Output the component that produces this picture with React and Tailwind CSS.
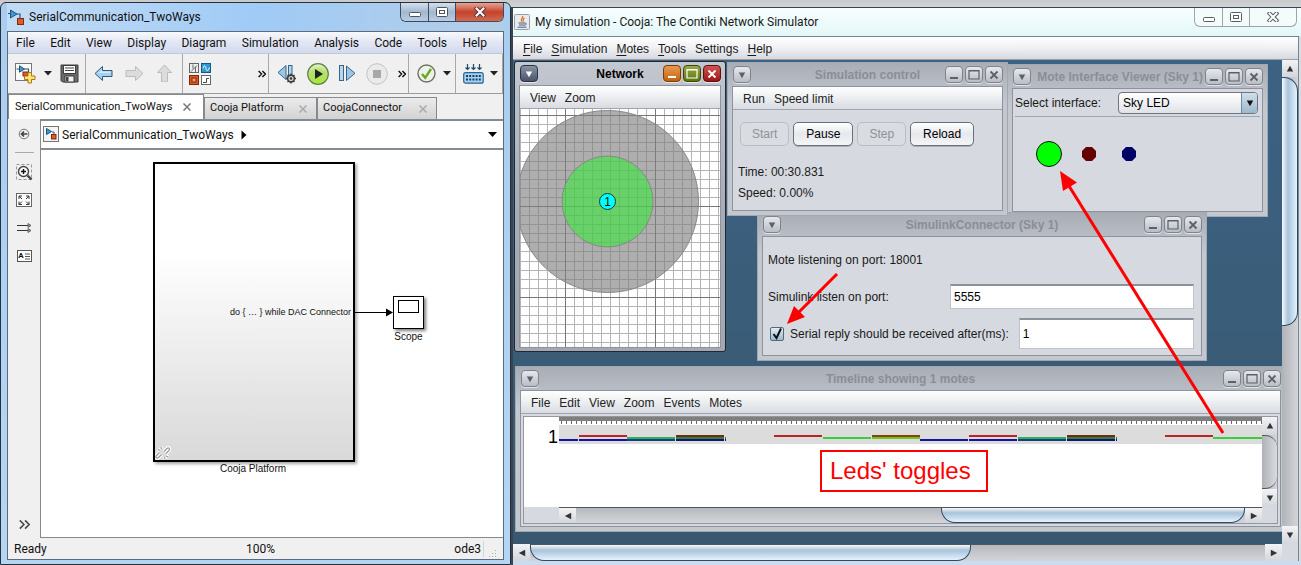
import React from "react";

/* ---------- small drawings ---------- */

const Caret = ({ className = "" }) => (
  <svg width="8" height="5" viewBox="0 0 8 5" className={className}>
    <path d="M0 0h8L4 4.5z" fill="#222" />
  </svg>
);

const Chevrons = ({ size = 8, color = "#111", w = 1.4 }) => (
  <svg width={size} height={size} viewBox="0 0 8 8" fill="none" stroke={color} strokeWidth={w}>
    <path d="M0.6 1l3 3-3 3M4.4 1l3 3-3 3" />
  </svg>
);

const ModelGlyph = ({ size = 16 }) => (
  <svg width={size} height={size} viewBox="0 0 16 16">
    <path d="M0 4.500h3M8 5h4v5" fill="none" stroke="#2c5878" strokeWidth="1.200" />
    <path d="M2.500 1l6.500 4-6.500 4z" fill="#3b9ad4" stroke="#1d557c" />
    <rect x="9.500" y="9.500" width="6" height="6" fill="#e2572b" stroke="#7e2d10" />
  </svg>
);

const FramedModel = () => (
  <svg width="17" height="17" viewBox="0 0 17 17">
    <rect x="0.500" y="0.500" width="15" height="15" fill="#f4f4f4" stroke="#777" />
    <path d="M9 6h2v4" fill="none" stroke="#2c5878" />
    <path d="M3.500 2.500l5 3-5 3z" fill="#3b9ad4" stroke="#1d557c" />
    <rect x="8.500" y="8.500" width="4.500" height="4.500" fill="#e2572b" stroke="#7e2d10" />
  </svg>
);

const NewIcon = () => (
  <svg width="21" height="21" viewBox="0 0 21 21">
    <rect x="0.500" y="0.500" width="16" height="17" fill="#fbfbfb" stroke="#777" />
    <path d="M1.500 6h3M9 6h4.500v4" fill="none" stroke="#2c5878" strokeWidth="1.200" />
    <path d="M4.500 2.800l5 3.200-5 3.200z" fill="#3b9ad4" stroke="#1d557c" />
    <rect x="8" y="9" width="5" height="4" fill="#e2572b" stroke="#7e2d10" />
    <path d="M13 9.500h3.500v3.500h3.500v3.500h-3.500v3.500H13v-3.500H9.500V13H13z" fill="#ffe27a" stroke="#a97a12" />
  </svg>
);

const SaveIcon = () => (
  <svg width="19" height="19" viewBox="0 0 19 19">
    <path d="M1 1h17v17H2.500L1 16.500z" fill="#6b6b6b" stroke="#3c3c3c" />
    <rect x="3.500" y="1.500" width="12" height="8" fill="#fff" stroke="#3c3c3c" />
    <path d="M5 4h9M5 6.500h9" stroke="#444" />
    <rect x="5" y="12" width="9" height="6" fill="#f0f0f0" stroke="#3c3c3c" />
    <rect x="6" y="13" width="2.500" height="4.500" fill="#444" />
  </svg>
);

const ArrowShape = ({ rotate, on }) => (
  <svg width="19" height="17" viewBox="0 0 19 17">
    <g transform={`rotate(${rotate} 9.500 8.500)`}>
      <path
        d="M1 8.500l7.500-7v4H18v6H8.500v4z"
        fill={on ? "#a4d0f2" : "#dcdcdc"}
        stroke={on ? "#31597c" : "#bcbcbc"}
        strokeLinejoin="round"
      />
      {on && <path d="M4 8l4-3v1.500h8.500V8z" fill="#d5ebfb" />}
    </g>
  </svg>
);

const LibraryIcon = () => (
  <svg width="22" height="22" viewBox="0 0 22 22">
    <rect x="0.500" y="0.500" width="9" height="9" fill="#eee" stroke="#666" />
    <path d="M2 8.500l6-6M4 1.500v4M6.500 4v5" stroke="#666" fill="none" />
    <rect x="12.500" y="0.500" width="9" height="9" fill="#2f9ad0" stroke="#14597f" />
    <path d="M14 5.500c1-4 2.500-3 3 0s2 3 3.500-1" stroke="#fff" fill="none" />
    <rect x="0.500" y="12.500" width="9" height="9" fill="#df5524" stroke="#7c2b0d" />
    <rect x="3" y="15" width="4" height="4" fill="#f59b70" stroke="#7c2b0d" />
    <rect x="12.500" y="12.500" width="9" height="9" fill="#fff" stroke="#666" />
    <path d="M14 19.500h3.500v-4H20" stroke="#444" fill="none" />
  </svg>
);

const StepBackIcon = () => (
  <svg width="20" height="20" viewBox="0 0 20 20">
    <path d="M9 1.500v14L1 8.500z" fill="#9cc6e6" stroke="#3b6587" />
    <rect x="11.500" y="1.500" width="3.500" height="11" fill="#b5d7ef" stroke="#3b6587" />
    <circle cx="14" cy="14.500" r="3.400" fill="#d0d0d0" stroke="#3e3e3e" strokeWidth="1.600" />
    <path d="M14 9.500v2M14 17.500v2M9 14.500h2M17 14.500h2M10.500 11l1.500 1.500M16 16.500l1.500 1.500M17.500 11L16 12.500M12 16.500L10.500 18" stroke="#3e3e3e" strokeWidth="1.400" />
    <circle cx="14" cy="14.500" r="1.200" fill="#333" />
  </svg>
);

const PlayIcon = () => (
  <svg width="22" height="22" viewBox="0 0 22 22">
    <defs>
      <radialGradient id="play" cx="0.5" cy="0.85" r="0.9">
        <stop offset="0" stopColor="#a8e63a" />
        <stop offset="0.6" stopColor="#b5e070" />
        <stop offset="1" stopColor="#f4fbe8" />
      </radialGradient>
    </defs>
    <circle cx="11" cy="11" r="10.300" fill="url(#play)" stroke="#5b8440" strokeWidth="1.200" />
    <path d="M8 6l8 5-8 5z" fill="#222" />
  </svg>
);

const StepIcon = () => (
  <svg width="17" height="17" viewBox="0 0 17 17">
    <rect x="0.500" y="0.500" width="4" height="15" fill="#b5d7ef" stroke="#3b6587" />
    <path d="M7.500 1v14.500L16 8.300z" fill="#9cc6e6" stroke="#3b6587" />
  </svg>
);

const StopIcon = () => (
  <svg width="22" height="22" viewBox="0 0 22 22">
    <circle cx="11" cy="11" r="10.300" fill="#eaeaea" stroke="#c4c4c4" />
    <rect x="7" y="7" width="8" height="8" fill="#a8a8a8" />
  </svg>
);

const CheckIcon = () => (
  <svg width="19" height="19" viewBox="0 0 19 19">
    <circle cx="9.500" cy="9.500" r="8.500" fill="#eef2e4" stroke="#6d7268" strokeWidth="1.400" />
    <path d="M5 10l3.200 3.800L14 5" fill="none" stroke="#6aa52a" strokeWidth="2.400" />
  </svg>
);

const BuildIcon = () => (
  <svg width="21" height="20" viewBox="0 0 21 20">
    <path d="M4.500 0v5M10.500 0v5M16.500 0v5M2.500 3.500l2 2 2-2M8.500 3.500l2 2 2-2M14.500 3.500l2 2 2-2" stroke="#1c4a70" strokeWidth="1.200" fill="none" />
    <rect x="0.700" y="8.700" width="19.500" height="10.500" rx="2" fill="#a6d3f5" stroke="#2a628f" strokeWidth="1.200" />
    <path d="M3 12h15M3 15.500h15" stroke="#17405f" strokeWidth="2" strokeDasharray="2 1.200" />
  </svg>
);

const MinGlyph = ({ color }) => (
  <svg width="12" height="5" viewBox="0 0 12 5">
    <rect x="0.500" y="0.500" width="11" height="4" rx="1" fill="#fff" stroke={color} />
  </svg>
);
const MaxGlyph = ({ color }) => (
  <svg width="12" height="10" viewBox="0 0 12 10">
    <rect x="0.500" y="0.500" width="11" height="9" rx="1" fill="#fff" stroke={color} />
    <rect x="3.500" y="3.500" width="5" height="3" fill="none" stroke={color} />
  </svg>
);
const CloseGlyph = ({ color }) => (
  <svg width="12" height="10" viewBox="0 0 12 10" strokeLinecap="square">
    <path d="M2.500 1.500l7 7M9.500 1.500l-7 7" stroke={color} strokeWidth="4" />
    <path d="M2.500 1.500l7 7M9.500 1.500l-7 7" stroke="#fff" strokeWidth="2" />
  </svg>
);

const JavaIcon = () => (
  <svg width="16" height="16" viewBox="0 0 16 16">
    <rect x="0.500" y="0.500" width="15" height="15" rx="1" fill="#e9eaec" stroke="#9a9da1" />
    <path d="M8.500 2c1.500 2-2.500 3-1 5.500M10.500 4C8 5.500 10 6 8.800 8" stroke="#e0651c" fill="none" strokeWidth="1.200" />
    <path d="M4.500 9h6.500M5 11h5.500M11 9c2 0 1.500 2-.5 2.300M3.500 13.200h9" stroke="#40617f" fill="none" />
  </svg>
);

const Tri = ({ dir = "down", color = "#333" }) => {
  const d = { down: "M1 2h8L5 9z", up: "M1 8h8L5 1z", left: "M9 1v8L1 5z", right: "M1 1v8l8-4z" }[dir];
  return (
    <svg width="8" height="8" viewBox="0 0 10 10">
      <path d={d} fill={color} />
    </svg>
  );
};

/* ---------- Simulink window ---------- */

function ToolButton({ label, children, disabled }) {
  return (
    <button aria-label={label} disabled={disabled} className="flex shrink-0 items-center justify-center">
      {children}
    </button>
  );
}

function Tab({ label, active, className }) {
  return (
    <div
      className={
        "flex items-center justify-between border-x border-t border-[#868a90] text-[11px] " +
        (active ? "h-[25px] bg-white pl-[6px] pr-3 " : "h-[22px] bg-gradient-to-b from-[#ececec] to-[#d2d2d2] pl-[5px] pr-[9px] ") +
        className
      }
    >
      <button className="whitespace-nowrap">{label}</button>
      <button aria-label={"Close " + label}>
        <svg width="8" height="8" viewBox="0 0 8 8">
          <path d="M0.500 0.500l7 7M7.500 0.500l-7 7" stroke={active ? "#777" : "#aaa"} strokeWidth="1.500" />
        </svg>
      </button>
    </div>
  );
}

const mainMenu = ["File", "Edit", "View", "Display", "Diagram", "Simulation", "Analysis", "Code", "Tools", "Help"];

function SimulinkWindow() {
  return (
    <section className="z-10 mt-[2px] flex w-[511px] shrink-0 flex-col rounded-t-md border border-[#26303a] bg-gradient-to-b from-[#a9cdf0] to-[#b5d5f5] px-[6px] pb-1 font-[Roboto,'Open_Sans',sans-serif] text-xs text-[#111]">
      <header className="flex h-[28px] shrink-0 items-start justify-between bg-gradient-to-r from-[#c3dcf5] via-[#9fcbf6] to-[#b4cde6]">
        <h1 className="flex items-center gap-[5px] pl-[1px] pt-[6px]">
          <ModelGlyph />
          <span>SerialCommunication_TwoWays</span>
        </h1>
        <div className="flex h-[19px] overflow-hidden rounded-b-md border border-t-0 border-[#3c4c60]">
          <button aria-label="Minimize" className="flex w-[28px] items-center justify-center border-r border-[#3c4c60] bg-gradient-to-b from-[#d3e0ee] via-[#a3b8cf] to-[#b8cde2] pt-1">
            <MinGlyph color="#4a5562" />
          </button>
          <button aria-label="Maximize" className="flex w-[27px] items-center justify-center border-r border-[#3c4c60] bg-gradient-to-b from-[#d3e0ee] via-[#a3b8cf] to-[#b8cde2]">
            <MaxGlyph color="#4a5562" />
          </button>
          <button aria-label="Close" className="flex w-[47px] items-center justify-center bg-gradient-to-b from-[#e6a295] via-[#c4412b] to-[#cf6a50]">
            <CloseGlyph color="#5c3434" />
          </button>
        </div>
      </header>

      <div className="flex flex-1 flex-col border border-[#5b6b7e] bg-[#f0f0f0]">
        <nav className="flex h-[21px] shrink-0 items-center justify-between bg-gradient-to-b from-[#f8f9fd] via-[#e2e6f3] to-[#d4daee] pl-2 pr-4">
          {mainMenu.map((m) => (
            <button key={m}>{m}</button>
          ))}
        </nav>

        <div className="flex h-[41px] shrink-0 items-stretch border-y border-t-[#c4c8d4] border-b-[#9b9b9b] [&>div]:flex [&>div]:items-center [&>div]:border-r [&>div]:border-[#a9a9a9]">
          <div className="w-[78px] gap-2 pl-[7px]">
            <ToolButton label="New model"><NewIcon /></ToolButton>
            <ToolButton label="New options"><Caret /></ToolButton>
            <ToolButton label="Save"><SaveIcon /></ToolButton>
          </div>
          <div className="w-[97px] justify-between px-2">
            <ToolButton label="Back"><ArrowShape rotate={0} on /></ToolButton>
            <ToolButton label="Forward" disabled><ArrowShape rotate={180} /></ToolButton>
            <ToolButton label="Up" disabled><ArrowShape rotate={90} /></ToolButton>
          </div>
          <div className="w-[86px] justify-between pl-[6px] pr-[2px]">
            <ToolButton label="Library browser"><LibraryIcon /></ToolButton>
            <ToolButton label="More"><Chevrons /></ToolButton>
          </div>
          <div className="w-[140px] justify-between pl-2 pr-[2px]">
            <ToolButton label="Step back"><StepBackIcon /></ToolButton>
            <ToolButton label="Run"><PlayIcon /></ToolButton>
            <ToolButton label="Step forward"><StepIcon /></ToolButton>
            <ToolButton label="Stop" disabled><StopIcon /></ToolButton>
            <ToolButton label="More simulation tools"><Chevrons /></ToolButton>
          </div>
          <div className="w-[47px] justify-between pl-2 pr-1">
            <ToolButton label="Advisor"><CheckIcon /></ToolButton>
            <ToolButton label="Advisor options"><Caret /></ToolButton>
          </div>
          <div className="flex-1 justify-between pl-[7px] pr-1">
            <ToolButton label="Build"><BuildIcon /></ToolButton>
            <ToolButton label="Build options"><Caret /></ToolButton>
          </div>
        </div>

        <div className="flex h-[25px] shrink-0 items-end">
          <Tab label="SerialCommunication_TwoWays" active className="w-[196px]" />
          <Tab label="Cooja Platform" className="w-[113px]" />
          <Tab label="CoojaConnector" className="w-[120px]" />
        </div>

        <div className="flex flex-1">
          <aside className="flex w-[32px] shrink-0 flex-col items-center pt-[9px]">
            <button aria-label="Hide browser">
              <svg width="12" height="12" viewBox="0 0 12 12" fill="none" stroke="#444">
                <circle cx="6" cy="6" r="4.800" stroke="#777" />
                <path d="M9.500 6H4M6 3.500L3.500 6 6 8.500" strokeWidth="1.700" />
              </svg>
            </button>
            <div className="mt-[12px] h-px w-[19px] bg-[#aaa]" />
            <button aria-label="Fit to view" className="mt-[11px]">
              <svg width="17" height="17" viewBox="0 0 17 17" fill="none">
                <rect x="0.500" y="0.500" width="15" height="15" stroke="#999" strokeDasharray="3 2" />
                <circle cx="7.500" cy="7.500" r="5" stroke="#444" strokeWidth="1.400" fill="#f8f8f8" />
                <path d="M5 7.500h5M7.500 5v5" stroke="#111" strokeWidth="1.400" />
                <path d="M11.500 11.500l4 4" stroke="#444" strokeWidth="2.400" />
              </svg>
            </button>
            <button aria-label="Zoom to fit" className="mt-[12px]">
              <svg width="17" height="15" viewBox="0 0 17 15" fill="none" stroke="#333">
                <rect x="0.500" y="0.500" width="15" height="13" fill="#fff" stroke="#666" />
                <path d="M3 6V3h3M3 3l3 3M13 6V3h-3M13 3l-3 3M3 8.500v3h3M3 11.500l3-3M13 8.500v3h-3M13 11.500l-3-3" />
              </svg>
            </button>
            <button aria-label="Signal lines" className="mt-[15px]">
              <svg width="15" height="10" viewBox="0 0 15 10" fill="none" stroke="#333">
                <path d="M0 2.500h11M0 7.500h11" />
                <path d="M11 0.500l3 2-3 2zM11 5.500l3 2-3 2z" fill="#999" stroke="#666" />
              </svg>
            </button>
            <button aria-label="Annotation" className="mt-[17px]">
              <span className="flex h-[12px] w-[15px] items-center justify-center gap-[1px] border border-[#555] bg-white text-[8px] font-bold">
                A
                <svg width="5" height="7" viewBox="0 0 5 7">
                  <path d="M0 1h5M0 3.500h5M0 6h5" stroke="#555" />
                </svg>
              </span>
            </button>
            <button aria-label="Show more" className="mb-[8px] mt-auto">
              <Chevrons size={11} color="#444" w={1.1} />
            </button>
          </aside>

          <div className="flex flex-1 flex-col border-l border-[#868a90]">
            <div className="flex h-[31px] shrink-0 items-center gap-[2px] border-y-2 border-[#858b93] bg-white pl-[2px] pr-[6px]">
              <FramedModel />
              <span>SerialCommunication_TwoWays</span>
              <svg width="6" height="10" viewBox="0 0 6 10" className="ml-[5px]">
                <path d="M0.500 0.500v9L5.500 5z" fill="#000" />
              </svg>
              <button aria-label="Path history" className="ml-auto">
                <svg width="9" height="5" viewBox="0 0 9 5"><path d="M0 0h9L4.500 5z" fill="#000" /></svg>
              </button>
            </div>

            {/* block diagram */}
            <div className="relative flex-1 border-b border-[#868a90] bg-white font-['Liberation_Sans',Arial,sans-serif] text-[10px]">
              <div className="absolute left-[112px] top-[12px] flex h-[300px] w-[202px] items-center justify-end border-2 border-black bg-gradient-to-b from-white from-30% to-[#d9d9d9] pr-[2px] text-[9px] shadow-[2px_2px_3px_rgba(0,0,0,0.35)]">
                do &#123; … &#125; while DAC Connector
                <svg width="16" height="16" viewBox="0 0 16 16" className="absolute bottom-0 left-0" fill="none">
                  <path d="M6.500 9.500l-3 3c-1.500 1.500-3.500-.500-2-2l3-3M9 6.500l3-3c1.500-1.500 3.500.500 2 2l-3 3M3 4.500l2 1M6 2l.5 2M11 11l2 1M9.500 12l.5 2" transform="translate(0 1)" stroke="#fff" strokeWidth="3.500" />
                  <path d="M6.500 9.500l-3 3c-1.500 1.500-3.500-.500-2-2l3-3M9 6.500l3-3c1.500-1.500 3.500.500 2 2l-3 3M3 4.500l2 1M6 2l.5 2M11 11l2 1M9.500 12l.5 2" transform="translate(0 1)" stroke="#999" strokeWidth="1.200" />
                </svg>
              </div>
              <div className="absolute left-[112px] top-[312px] w-[200px] text-center">Cooja Platform</div>
              <svg width="38" height="10" viewBox="0 0 38 10" className="absolute left-[314px] top-[157px]">
                <path d="M0 5.500h32" stroke="#000" />
                <path d="M31 1.500v8l7-4z" fill="#000" />
              </svg>
              <div className="absolute left-[352px] top-[146px] h-[33px] w-[31px] border border-black bg-white px-1 pt-[3px] shadow-[2px_2px_3px_rgba(0,0,0,0.5)]">
                <div className="h-[13px] border border-black" />
              </div>
              <div className="absolute left-[342px] top-[180px] w-[51px] text-center">Scope</div>
            </div>
          </div>
        </div>

        <footer className="relative flex h-[21px] shrink-0 items-center px-[6px]">
          <span>Ready</span>
          <span className="absolute inset-x-0 pl-[10px] text-center">100%</span>
          <span className="ml-auto mr-1 border-r border-[#d4d4d4] pr-[2px]">ode3</span>
          <svg width="9" height="9" viewBox="0 0 9 9" className="self-end" fill="#aaa">
            <path d="M7 0h1v1H7zM7 3h1v1H7zM7 6h1v1H7zM4 3h1v1H4zM4 6h1v1H4zM1 6h1v1H1z" />
          </svg>
        </footer>
      </div>
    </section>
  );
}

/* ---------- Cooja window ---------- */

const frameGrey = "border-[#7f838c] bg-gradient-to-b from-[#e6e8ec] to-[#b9bdc6] text-[#5d6066]";

function FrameButton({ label, tone, children }) {
  return (
    <button aria-label={label} className={"flex h-[17px] w-[18px] items-center justify-center rounded-[4px] border shadow-[0_1px_0_rgba(255,255,255,0.6)] " + tone}>
      {children}
    </button>
  );
}

function InternalFrame({ title, active, className, children }) {
  return (
    <section
      className={
        "absolute flex flex-col border px-[4px] pb-[4px] " +
        (active
          ? "rounded-[3px] border-[#22272e] bg-gradient-to-b from-[#c3c7cf] via-[#a7acb6] to-[#a2a7b2] "
          : "border-[#a4a8b1] bg-gradient-to-b from-[#a9adb6] to-[#c3c7ce] to-[40px] ") +
        className
      }
    >
      <header className="grid h-[23px] shrink-0 grid-cols-[1fr_auto_1fr] items-center">
        <div className="pl-[1px]">
          <FrameButton label="Window menu" tone={active ? "border-[#2b3444] bg-gradient-to-b from-[#8b94a5] to-[#49556a]" : frameGrey}>
            <Tri color={active ? "#fff" : "#5d6066"} />
          </FrameButton>
        </div>
        <h2 className={"whitespace-nowrap px-[2px] text-[12px] font-bold " + (active ? "text-black" : "text-[#8b8e95]")}>{title}</h2>
        <div className="flex justify-end gap-[2px]">
          <FrameButton label="Minimize" tone={active ? "border-[#7d3c08] bg-gradient-to-b from-[#e89a4e] to-[#c56208]" : frameGrey}>
            <svg width="10" height="10" viewBox="0 0 10 10"><path d="M1 8h8" stroke={active ? "#fff" : "#5d6066"} strokeWidth="2" /></svg>
          </FrameButton>
          <FrameButton label="Maximize" tone={active ? "border-[#3d4a08] bg-gradient-to-b from-[#9aab44] to-[#5f740a]" : frameGrey}>
            <svg width="12" height="11" viewBox="0 0 12 11"><path d="M1 10V1.500h10V10z" fill="none" stroke={active ? "#fff" : "#5d6066"} strokeWidth="1.200" /><path d="M1 2h10" stroke={active ? "#fff" : "#5d6066"} /></svg>
          </FrameButton>
          <FrameButton label="Close" tone={active ? "border-[#5e0f0f] bg-gradient-to-b from-[#cf5454] to-[#9b1414]" : frameGrey}>
            <svg width="10" height="10" viewBox="0 0 10 10"><path d="M1.500 1.500l7 7M8.500 1.500l-7 7" stroke={active ? "#fff" : "#5d6066"} strokeWidth="1.800" /></svg>
          </FrameButton>
        </div>
      </header>
      <div className="flex flex-1 flex-col border border-[#8d929d] bg-[#d6d9df]">{children}</div>
    </section>
  );
}

function FrameMenu({ items }) {
  return (
    <nav className="flex h-[23px] shrink-0 items-center gap-[9px] border-b border-[#a0a5af] bg-gradient-to-b from-white via-[#eceef1] to-[#d8dbe1] pl-[10px] pt-[2px] text-[#222]">
      {items.map((i) => (
        <button key={i}>{i}</button>
      ))}
    </nav>
  );
}

function range(start, end, step) {
  const out = [];
  for (let v = start; v <= end; v += step) out.push(v);
  return out;
}

function NetworkView() {
  return (
    <svg className="w-full flex-1 bg-white" viewBox="0 0 200 238" preserveAspectRatio="xMinYMin slice">
      {range(0.5, 200, 9).map((x) => (
        <path key={x} d={`M${x} 0V238`} stroke="#b4b4b4" />
      ))}
      {range(6.5, 238, 9.1).map((y) => (
        <path key={y} d={`M0 ${Math.floor(y) + 0.5}H200`} stroke="#b4b4b4" />
      ))}
      <path d="M45.500 0V238M135.500 0V238M0 6.500H200M0 97.500H200M0 188.500H200" stroke="#777" />
      <circle cx="87.500" cy="92.500" r="91" fill="#808080" fillOpacity="0.640" stroke="#888" />
      <circle cx="87.500" cy="92.500" r="45.500" fill="#33ee33" fillOpacity="0.560" stroke="#888" />
      <circle cx="87.500" cy="92.500" r="8" fill="#00ffff" stroke="#143c3c" />
      <text x="87.500" y="97" textAnchor="middle" fontSize="12" fill="#111">1</text>
    </svg>
  );
}

function PushButton({ children, disabled }) {
  return (
    <button
      disabled={disabled}
      className={
        "h-[24px] rounded-[5px] border " +
        (disabled
          ? "border-[#b9bdc5] bg-[#d9dce1] px-[11px] text-[#8e9299]"
          : "border-[#6b7078] bg-gradient-to-b from-white via-[#e6e8ec] to-[#f4f5f7] px-3 text-black shadow-[0_1px_0_#aaaeb6]")
      }
    >
      {children}
    </button>
  );
}

const R = "#b82525";
const G = "#3dcc3d";
const B = "#1414a0";
const ledSegments = [
  [0, 19, null, null, B],
  [20, 48, R, null, B],
  [68, 48, null, "#2fae60", "#17407a"],
  [117, 48, "#6e2f08", "#3a7a48", "#0a1a70"],
  [166, 1, null, "#3a7a48", B],
  [215, 48, R, null, null],
  [264, 48, null, G, null],
  [313, 48, "#8a4008", "#66c818", null],
  [361, 48, null, null, B],
  [410, 48, R, null, B],
  [459, 48, null, "#2fae60", "#17407a"],
  [508, 48, "#6e2f08", "#3a7a48", "#0a1a70"],
  [557, 1, null, "#3a7a48", B],
  [606, 48, R, null, null],
  [654, 49, null, G, null],
];

function Tracks() {
  return (
    <svg className="block h-[27px] w-full" viewBox="0 0 703 27" preserveAspectRatio="none" role="img" aria-label="LED timeline">
      <rect width="703" height="27" fill="#7f7f7f" />
      <rect y="4" width="703" height="4" fill="#fff" />
      {range(2.5, 703, 5).map((x) => (
        <path key={x} d={`M${x} 4v3`} stroke="#666" />
      ))}
      <rect y="8" width="703" height="19" fill="#dcdcdc" />
      {ledSegments.map(([x, w, r, g, b]) => (
        <g key={x}>
          {r && <rect x={x} y="18" width={w} height="2" fill={r} />}
          {g && <rect x={x} y="20" width={w} height="2" fill={g} />}
          {b && <rect x={x} y="22" width={w} height="2" fill={b} />}
        </g>
      ))}
    </svg>
  );
}

const scrollBtn = "flex shrink-0 items-center justify-center bg-gradient-to-b from-[#f2f3f5] to-[#d3d6dc]";
const trackH = "bg-gradient-to-b from-[#b5b8be] to-[#d3d5d9]";
const trackV = "bg-gradient-to-r from-[#b0b3b9] to-[#d3d5d9]";
const thumbH = "rounded-b-[14px] border border-[#2f4a62] bg-gradient-to-b from-[#f4f9fd] via-[#a9c3da] via-35% to-[#e4f3ff]";

function Timeline() {
  return (
    <div className="m-[2px] flex flex-1 flex-col border border-[#9297a1] bg-[#d6d9df]">
      <div className="flex flex-1 bg-white">
        <div className="w-[35px] shrink-0 pr-px pt-[11px] text-right text-[18px] leading-[18px] text-black">1</div>
        <div className="min-w-0 flex-1"><Tracks /></div>
        <div className={"flex w-[15px] shrink-0 flex-col " + trackV}>
          <button aria-label="Scroll up" className={scrollBtn + " h-[18px]"}><Tri dir="up" /></button>
          <div className="flex-1 rounded-r-xl border-y border-[#555] bg-gradient-to-r from-[#aeb1b7] to-[#d9dbdf]" />
          <button aria-label="Scroll down" className={scrollBtn + " h-[18px]"}><Tri /></button>
        </div>
      </div>
      <div className="flex h-[16px] shrink-0 pl-[35px] pr-[15px]">
        <div className={"flex flex-1 border-t border-[#555] " + trackH}>
          <button aria-label="Scroll left" className={scrollBtn + " w-[17px]"}><Tri dir="left" /></button>
          <div className="flex flex-1 justify-end rounded-bl-2xl">
            <div className={"w-[304px] border-t-0 " + thumbH} />
          </div>
          <button aria-label="Scroll right" className={scrollBtn + " w-[17px]"}><Tri dir="right" /></button>
        </div>
      </div>
    </div>
  );
}

const field = "h-full min-w-0 flex-1 border border-t-2 border-[#c0c3c9] border-t-[#8d9199] bg-white pl-[3px] text-black";

function Desktop() {
  return (
    <div className="relative min-w-0 flex-1 overflow-hidden bg-gradient-to-b from-[#3c6283] to-[#38586f]">
      <InternalFrame title="Network" active className="left-[1px] top-[1px] h-[291px] w-[212px]">
        <FrameMenu items={["View", "Zoom"]} />
        <NetworkView />
      </InternalFrame>

      <InternalFrame title="Mote Interface Viewer (Sky 1)" className="left-[494px] top-[4px] h-[153px] w-[261px]">
        <div className="mx-[2px] flex h-[28px] items-center gap-[17px] border-b border-[#a0a5af]">
          <label htmlFor="iface" className="whitespace-nowrap">Select interface:</label>
          <div className="relative flex-1 pr-[2px]">
            <select id="iface" className="block h-[22px] w-full appearance-none rounded-[4px] border border-[#6f767f] bg-gradient-to-b from-white to-[#dfe2e7] pl-1 text-black">
              <option>Sky LED</option>
            </select>
            <span className="pointer-events-none absolute right-[3px] top-[1px] flex h-[20px] w-[16px] items-center justify-center rounded-r-[3px] border-l border-[#6f8ba3] bg-gradient-to-b from-[#d0dfea] to-[#9cb8cd]">
              <Tri color="#111" />
            </span>
          </div>
        </div>
        <svg width="140" height="40" viewBox="0 0 140 40" className="ml-[11px] mt-[16px]" role="img" aria-label="Green, red and blue LEDs">
          <circle cx="25" cy="21" r="12.500" fill="#00ff00" stroke="#111" />
          <path d="M62 14h6l4 4v6l-4 4h-6l-4-4v-6z" fill="#660000" />
          <path d="M102 14h6l4 4v6l-4 4h-6l-4-4v-6z" fill="#000066" />
        </svg>
      </InternalFrame>

      <InternalFrame title="SimulinkConnector (Sky 1)" className="left-[244px] top-[152px] h-[149px] w-[450px]">
        <div className="flex flex-1 flex-col pl-[5px] pr-[7px] pt-[14px]">
          <p className="leading-[18px]">Mote listening on port: 18001</p>
          <div className="mt-[15px] flex h-[25px] items-center">
            <label htmlFor="port" className="w-[182px]">Simulink listen on port:</label>
            <input id="port" defaultValue="5555" className={field} />
          </div>
          <div className="mt-[9px] flex h-[31px] items-center">
            <span className="relative ml-[2px] flex">
              <input id="reply" type="checkbox" defaultChecked className="h-[14px] w-[14px] appearance-none rounded-[2px] border border-[#506a80] bg-gradient-to-b from-[#e2edf5] to-[#9fb9cc]" />
              <svg width="14" height="14" viewBox="0 0 14 14" className="pointer-events-none absolute left-0 top-0" fill="none">
                <path d="M3.500 7l3 4 4.500-9.500" stroke="#111" strokeWidth="2" />
              </svg>
            </span>
            <label htmlFor="reply" className="ml-[6px] mr-[10px] whitespace-nowrap">Serial reply should be received after(ms):</label>
            <input aria-label="Serial reply delay in milliseconds" defaultValue="1" className={field} />
          </div>
        </div>
      </InternalFrame>

      <InternalFrame title="Simulation control" className="left-[214px] top-[2px] h-[154px] w-[281px]">
        <FrameMenu items={["Run", "Speed limit"]} />
        <div className="flex gap-1 pl-[7px] pt-[12px]">
          <PushButton disabled>Start</PushButton>
          <PushButton>Pause</PushButton>
          <PushButton disabled>Step</PushButton>
          <PushButton>Reload</PushButton>
        </div>
        <div className="flex flex-col gap-[3px] pl-[5px] pt-[17px] leading-[18px]">
          <p>Time: 00:30.831</p>
          <p>Speed: 0.00%</p>
        </div>
      </InternalFrame>

      <InternalFrame title="Timeline showing 1 motes" className="-right-[4px] left-[2px] top-[306px] h-[166px]">
        <FrameMenu items={["File", "Edit", "View", "Zoom", "Events", "Motes"]} />
        <Timeline />
      </InternalFrame>

      {/* annotations */}
      <p className="absolute left-[307px] top-[390px] flex h-[42px] w-[168px] items-center border-2 border-[#f00] bg-white pl-2 text-[24px] text-[#f00]">
        Leds' toggles
      </p>
      <svg width="769" height="483" viewBox="513 60 769 483" className="pointer-events-none absolute left-0 top-0" stroke="#f00" fill="#f00">
        <path d="M1223 433L1069 186" strokeWidth="3" />
        <path d="M1060 171l17 11.500-14 8.500z" stroke="none" />
        <path d="M837 274L797 314" strokeWidth="3" />
        <path d="M787 324l7-18 11 11z" stroke="none" />
      </svg>
    </div>
  );
}

const coojaMenu = ["File", "Simulation", "Motes", "Tools", "Settings", "Help"];

function CoojaWindow() {
  return (
    <section className="mt-[7px] flex min-w-0 flex-1 flex-col border-l-2 border-t border-[#3a444e] bg-[#d8dde4] font-['Liberation_Sans',Arial,sans-serif] text-xs text-[#1a1a1a]">
      <header className="flex h-[28px] shrink-0 items-start justify-between bg-gradient-to-b from-[#f8fefe] to-[#e3f7f8] pl-px pr-1">
        <h1 className="flex items-center gap-[5px] pt-[6px] font-[Roboto,'Open_Sans',sans-serif]">
          <JavaIcon />
          My simulation - Cooja: The Contiki Network Simulator
        </h1>
        <div className="flex h-[19px] rounded-b-md border border-t-0 border-[#9aa4ab] bg-[#f3fbfb]">
          <button aria-label="Minimize" className="flex w-[28px] items-center justify-center border-r border-[#9aa4ab] pt-1"><MinGlyph color="#555d66" /></button>
          <button aria-label="Maximize" className="flex w-[27px] items-center justify-center border-r border-[#9aa4ab]"><MaxGlyph color="#555d66" /></button>
          <button aria-label="Close" className="flex w-[46px] items-center justify-center"><CloseGlyph color="#555d66" /></button>
        </div>
      </header>
      <div className="mr-[2px] flex flex-1 flex-col border-r border-t border-[#7c838c]">
        <nav className="flex h-[23px] shrink-0 items-center gap-[9px] border-b border-[#9a9fa8] bg-gradient-to-b from-white via-[#eff0f3] to-[#d6d9df] pl-[10px] pt-[2px]">
          {coojaMenu.map((m) =>
            m === "Settings" ? (
              <button key={m}>{m}</button>
            ) : (
              <button key={m}><u className="underline-offset-2">{m[0]}</u>{m.slice(1)}</button>
            )
          )}
        </nav>
        <div className="flex flex-1">
          <Desktop />
          <div className={"flex w-[16px] shrink-0 flex-col " + trackV}>
            <button aria-label="Scroll up" className={scrollBtn + " h-[17px]"}><Tri dir="up" /></button>
            <div className="h-[249px] rounded-r-[14px] border border-l-0 border-[#2f4a62] bg-gradient-to-r from-[#f4f9fd] via-[#a9c3da] via-40% to-[#e4f3ff]" />
            <button aria-label="Scroll down" className={scrollBtn + " mt-auto h-[18px]"}><Tri /></button>
          </div>
        </div>
        <div className="flex h-[17px] shrink-0 bg-[#d6d9df] pr-[16px]">
          <button aria-label="Scroll left" className={scrollBtn + " w-[17px]"}><Tri dir="left" /></button>
          <div className={"flex-1 border-t border-[#555] " + trackH}>
            <div className={"h-full w-3/5 border-t-0 " + thumbH} />
          </div>
          <button aria-label="Scroll right" className={scrollBtn + " w-[17px]"}><Tri dir="right" /></button>
        </div>
      </div>
      <div className="h-[4px] shrink-0 bg-[#c9dcf0]" />
    </section>
  );
}

export default function App() {
  return (
    <main className="flex h-screen min-h-[565px] overflow-hidden bg-gradient-to-b from-[#c9c9c9] to-[#dfe9f4] to-[20px]">
      <SimulinkWindow />
      <CoojaWindow />
    </main>
  );
}
